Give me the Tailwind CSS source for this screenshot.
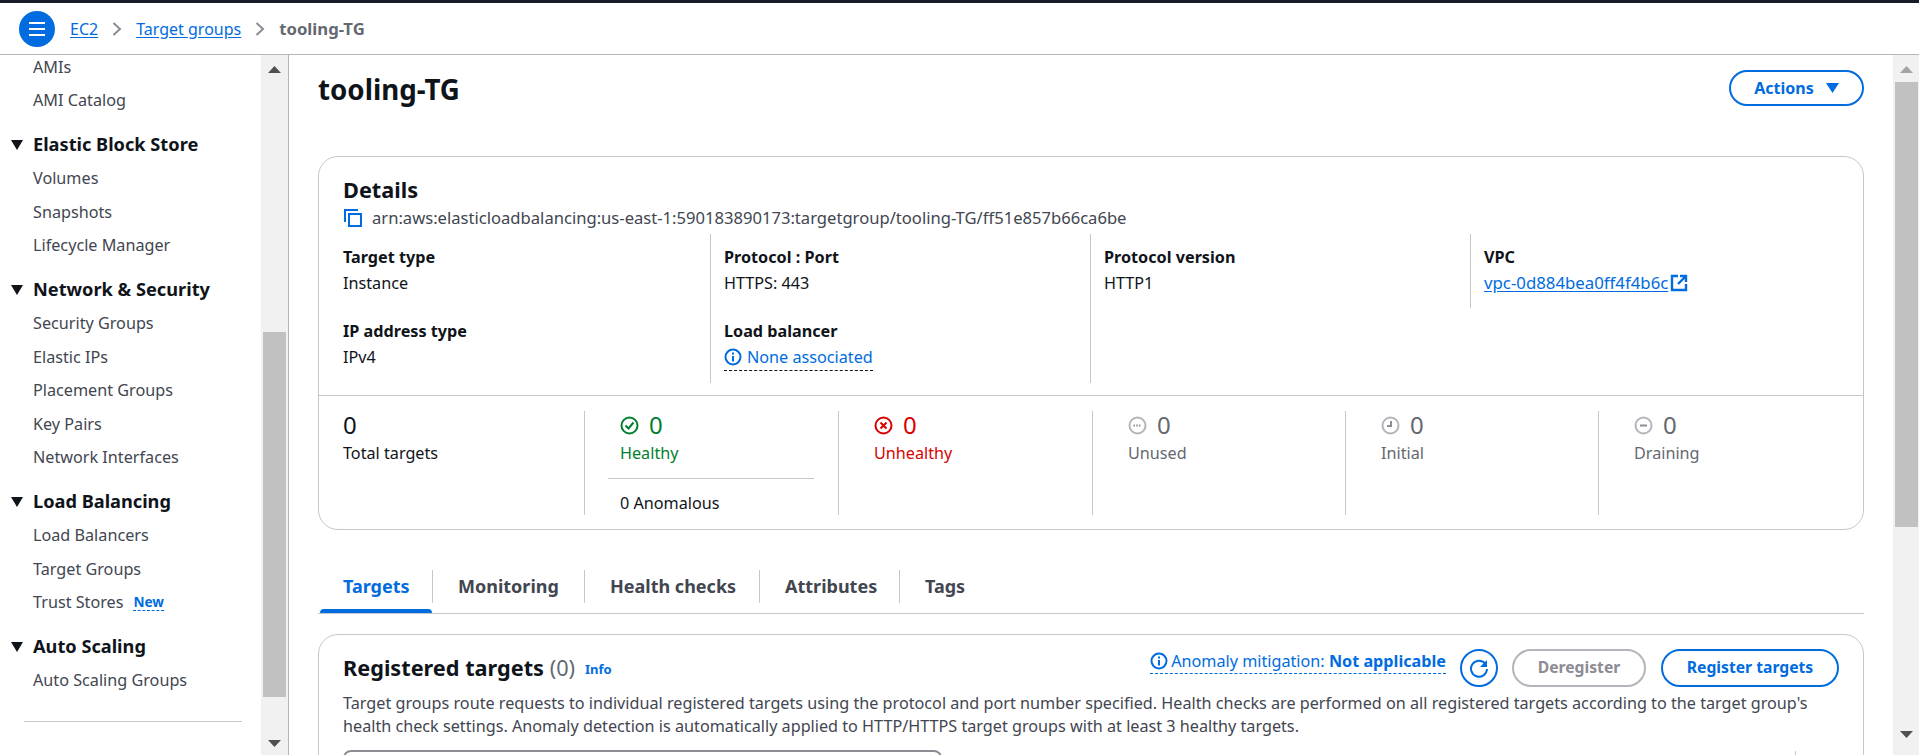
<!DOCTYPE html>
<html><head><meta charset="utf-8"><script src="https://cdn.jsdelivr.net/npm/@tailwindcss/browser@4"></script></head>
<body class="h-[755px] w-[1919px] overflow-hidden bg-white font-['Noto_Sans',sans-serif] text-[16.2px] text-[#0f141a]">
<div class="h-[3px] bg-[#161d26]"></div>
<header class="flex h-[52px] items-center border-b border-[#b4b4bb] pl-[19px] text-[16px]">
  <button class="flex size-[36px] items-center justify-center rounded-full bg-[#006ce0]"><svg width="20" height="16" viewBox="0 0 20 16" fill="none" stroke="#fff" stroke-width="2"><path d="M2 2h16M2 8h16M2 14h16"/></svg></button>
  <a class="ml-[15px] text-[#006ce0] underline underline-offset-2">EC2</a>
  <svg class="mx-[14px]" width="10" height="14" viewBox="0 0 10 14" fill="none" stroke="#8c8c94" stroke-width="2"><path d="M1.5 1l6.5 6-6.5 6"/></svg>
  <a class="text-[#006ce0] underline underline-offset-2">Target groups</a>
  <svg class="mx-[14px]" width="10" height="14" viewBox="0 0 10 14" fill="none" stroke="#8c8c94" stroke-width="2"><path d="M1.5 1l6.5 6-6.5 6"/></svg>
  <span class="text-[16.7px] font-bold text-[#656871]">tooling-TG</span>
</header>
<div class="flex h-[700px]">
  <aside class="flex w-[289px] shrink-0 border-r border-[#b4b4bb]">
    <nav class="h-full w-[261px] overflow-hidden">
      <ul class="-mt-[5px] text-[#424650]">
        <li class="flex h-[33.5px] items-center pl-[33px]">AMIs</li>
        <li class="flex h-[33.5px] items-center pl-[33px]">AMI Catalog</li>
        <li class="mt-[11px] flex h-[33.5px] items-center gap-[10px] pl-[11px] text-[18.2px] font-bold text-[#0f141a]"><svg width="12" height="10" viewBox="0 0 12 10" fill="#0f141a"><path d="M0 0h12L6 10z"/></svg>Elastic Block Store</li>
        <li class="flex h-[33.5px] items-center pl-[33px]">Volumes</li>
        <li class="flex h-[33.5px] items-center pl-[33px]">Snapshots</li>
        <li class="flex h-[33.5px] items-center pl-[33px]">Lifecycle Manager</li>
        <li class="mt-[11px] flex h-[33.5px] items-center gap-[10px] pl-[11px] text-[18.2px] font-bold text-[#0f141a]"><svg width="12" height="10" viewBox="0 0 12 10" fill="#0f141a"><path d="M0 0h12L6 10z"/></svg>Network &amp; Security</li>
        <li class="flex h-[33.5px] items-center pl-[33px]">Security Groups</li>
        <li class="flex h-[33.5px] items-center pl-[33px]">Elastic IPs</li>
        <li class="flex h-[33.5px] items-center pl-[33px]">Placement Groups</li>
        <li class="flex h-[33.5px] items-center pl-[33px]">Key Pairs</li>
        <li class="flex h-[33.5px] items-center pl-[33px]">Network Interfaces</li>
        <li class="mt-[11px] flex h-[33.5px] items-center gap-[10px] pl-[11px] text-[18.2px] font-bold text-[#0f141a]"><svg width="12" height="10" viewBox="0 0 12 10" fill="#0f141a"><path d="M0 0h12L6 10z"/></svg>Load Balancing</li>
        <li class="flex h-[33.5px] items-center pl-[33px]">Load Balancers</li>
        <li class="flex h-[33.5px] items-center pl-[33px]">Target Groups</li>
        <li class="flex h-[33.5px] items-center gap-[10px] pl-[33px]">Trust Stores <span class="border-b border-dashed border-[#006ce0] text-[13.6px] font-bold leading-[16px] text-[#006ce0]">New</span></li>
        <li class="mt-[11px] flex h-[33.5px] items-center gap-[10px] pl-[11px] text-[18.2px] font-bold text-[#0f141a]"><svg width="12" height="10" viewBox="0 0 12 10" fill="#0f141a"><path d="M0 0h12L6 10z"/></svg>Auto Scaling</li>
        <li class="flex h-[33.5px] items-center pl-[33px]">Auto Scaling Groups</li>
      </ul>
      <div class="ml-[24px] mt-[24px] w-[218px] border-t border-[#c6c6cd]"></div>
    </nav>
    <div class="flex h-full w-[27px] flex-col items-center bg-[#f1f1f1]">
      <svg class="mt-[11px] shrink-0" width="13" height="7" viewBox="0 0 13 7" fill="#505050"><path d="M6.5 0L13 7H0z"/></svg>
      <div class="mt-[259px] h-[365px] w-[23px] shrink-0 bg-[#c1c1c1]"></div>
      <svg class="mt-[43px] shrink-0" width="13" height="7" viewBox="0 0 13 7" fill="#505050"><path d="M6.5 7L13 0H0z"/></svg>
    </div>
  </aside>
  <main class="h-full flex-1 overflow-hidden px-[29px]">
    <div class="flex h-[101px] items-start justify-between pt-[15px]">
      <h1 class="text-[27.7px] font-bold leading-[38px]">tooling-TG</h1>
      <button class="flex h-[36px] w-[135px] items-center justify-center gap-[12px] rounded-full border-2 border-[#006ce0] text-[16px] font-bold text-[#006ce0]">Actions<svg width="13" height="10" viewBox="0 0 13 10" fill="#006ce0"><path d="M0 0h13L6.5 10z"/></svg></button>
    </div>
    <section class="h-[374px] rounded-[20px] border border-[#c6c6cd]">
      <div class="px-[24px] pt-[19px]">
        <h2 class="text-[21.7px] font-bold leading-[28px]">Details</h2>
        <div class="mt-[4px] flex h-[20px] items-center gap-[10px] pl-[1px] text-[16.6px] text-[#424650]">
          <svg width="18" height="18" viewBox="0 0 18 18" fill="none" stroke="#006ce0" stroke-width="2"><path d="M1 13V1h13"/><rect x="5" y="5" width="12" height="12"/></svg>
          <span>arn:aws:elasticloadbalancing:us-east-1:590183890173:targetgroup/tooling-TG/ff51e857b66ca6be</span>
        </div>
      </div>
      <div class="mt-[6px] grid h-[149px] grid-cols-[367px_380px_380px_1fr] pl-[24px]">
        <div class="pt-[10px]">
          <div class="font-bold leading-[26px]">Target type</div><div class="leading-[26px]">Instance</div>
          <div class="mt-[22px] font-bold leading-[26px]">IP address type</div><div class="leading-[26px]">IPv4</div>
        </div>
        <div class="border-l border-[#c6c6cd] pl-[13px] pt-[10px]">
          <div class="font-bold leading-[26px]">Protocol : Port</div><div class="leading-[26px]">HTTPS: 443</div>
          <div class="mt-[22px] font-bold leading-[26px]">Load balancer</div>
          <div class="flex h-[27px] w-fit items-center gap-[5px] border-b border-dashed border-[#0f141a] text-[#006ce0]"><svg width="18" height="18" viewBox="0 0 18 18" fill="none" stroke="#006ce0" stroke-width="2"><circle cx="9" cy="9" r="7.5"/><path d="M9 8v5.5M9 4.5v2"/></svg>None associated</div>
        </div>
        <div class="border-l border-[#c6c6cd] pl-[13px] pt-[10px]">
          <div class="font-bold leading-[26px]">Protocol version</div><div class="leading-[26px]">HTTP1</div>
        </div>
        <div class="h-[74px] border-l border-[#c6c6cd] pl-[13px] pt-[10px]">
          <div class="font-bold leading-[26px]">VPC</div>
          <div class="flex h-[26px] items-center text-[16.8px] text-[#006ce0]"><a class="pr-[2px] underline underline-offset-2">vpc-0d884bea0ff4f4b6c</a><svg width="18" height="18" viewBox="0 0 18 18" fill="none" stroke="#006ce0" stroke-width="2.4"><path d="M8 2H2v14h14v-6M10 2h6v6M16 2L8 10"/></svg></div>
        </div>
      </div>
      <div class="mt-[12px] grid grid-cols-[241px_254px_254px_253px_253px_1fr] border-t border-[#c6c6cd] pl-[24px] pt-[15px]">
        <div class="h-[104px]">
          <div class="text-[24px] leading-[28px]">0</div><div class="leading-[28px]">Total targets</div>
        </div>
        <div class="h-[104px] border-l border-[#c6c6cd] pl-[35px] text-[#00802f]">
          <div class="flex h-[28px] items-center gap-[10px] text-[24px]"><svg width="19" height="19" viewBox="0 0 19 19" fill="none" stroke="#00802f" stroke-width="2"><circle cx="9.5" cy="9.5" r="8"/><path d="M5.5 9.5l3 3 5-6"/></svg>0</div>
          <div class="leading-[28px]">Healthy</div>
          <div class="-ml-[12px] mt-[11px] w-[206px] border-t border-[#c6c6cd]"></div>
          <div class="mt-[11px] leading-[26px] text-[#0f141a]">0 Anomalous</div>
        </div>
        <div class="h-[104px] border-l border-[#c6c6cd] pl-[35px] text-[#db0000]">
          <div class="flex h-[28px] items-center gap-[10px] text-[24px]"><svg width="19" height="19" viewBox="0 0 19 19" fill="none" stroke="#db0000" stroke-width="2"><circle cx="9.5" cy="9.5" r="8"/><path d="M6.5 6.5l6 6M12.5 6.5l-6 6"/></svg>0</div>
          <div class="leading-[28px]">Unhealthy</div>
        </div>
        <div class="h-[104px] border-l border-[#c6c6cd] pl-[35px] text-[#656871]">
          <div class="flex h-[28px] items-center gap-[10px] text-[24px]"><svg width="19" height="19" viewBox="0 0 19 19" fill="none" stroke="#b4b4bb" stroke-width="2"><circle cx="9.5" cy="9.5" r="8"/><path stroke="#8c8c94" stroke-dasharray="1.5 1.2" d="M5.5 9.5h8"/></svg>0</div>
          <div class="leading-[28px]">Unused</div>
        </div>
        <div class="h-[104px] border-l border-[#c6c6cd] pl-[35px] text-[#656871]">
          <div class="flex h-[28px] items-center gap-[10px] text-[24px]"><svg width="19" height="19" viewBox="0 0 19 19" fill="none" stroke="#b4b4bb" stroke-width="2"><circle cx="9.5" cy="9.5" r="8"/><path stroke="#8c8c94" d="M10 5v5H6"/></svg>0</div>
          <div class="leading-[28px]">Initial</div>
        </div>
        <div class="h-[104px] border-l border-[#c6c6cd] pl-[35px] text-[#656871]">
          <div class="flex h-[28px] items-center gap-[10px] text-[24px]"><svg width="19" height="19" viewBox="0 0 19 19" fill="none" stroke="#b4b4bb" stroke-width="2"><circle cx="9.5" cy="9.5" r="8"/><path stroke="#8c8c94" d="M6 9.5h7"/></svg>0</div>
          <div class="leading-[28px]">Draining</div>
        </div>
      </div>
    </section>
    <div class="mt-[40px] flex h-[44px] border-b border-[#c6c6cd] text-[18px] font-bold text-[#424650]">
      <div class="relative flex h-[33px] w-[115px] items-center border-r border-[#c6c6cd] pl-[25px] text-[#006ce0]">Targets<span class="absolute -bottom-[10px] left-[2px] right-0 h-[4px] rounded-t-[4px] bg-[#006ce0]"></span></div>
      <div class="flex h-[33px] w-[152px] items-center border-r border-[#c6c6cd] pl-[25px]">Monitoring</div>
      <div class="flex h-[33px] w-[175px] items-center border-r border-[#c6c6cd] pl-[25px]">Health checks</div>
      <div class="flex h-[33px] w-[140px] items-center border-r border-[#c6c6cd] pl-[25px]">Attributes</div>
      <div class="flex h-[33px] items-center pl-[25px]">Tags</div>
    </div>
    <section class="mt-[20px] h-[200px] rounded-[20px] border border-[#c6c6cd] px-[24px] pt-[14px]">
      <div class="flex h-[38px] items-center justify-between">
        <div class="flex items-center gap-[10px]">
          <h2 class="text-[21.7px] font-bold">Registered targets <span class="font-normal text-[#656871]">(0)</span></h2>
          <a class="mt-[4px] text-[13px] font-bold text-[#006ce0]">Info</a>
        </div>
        <div class="flex items-center">
          <span class="flex h-[25px] items-center gap-[3px] self-start border-b border-dashed border-[#006ce0] text-[#006ce0]"><svg width="18" height="18" viewBox="0 0 18 18" fill="none" stroke="#006ce0" stroke-width="2"><circle cx="9" cy="9" r="7.5"/><path d="M9 8v5.5M9 4.5v2"/></svg><span>Anomaly mitigation: <b>Not applicable</b></span></span>
          <button class="ml-[14px] flex size-[38px] items-center justify-center rounded-full border-2 border-[#006ce0]"><svg width="20" height="20" viewBox="0 0 20 20" fill="none" stroke="#006ce0" stroke-width="2"><path d="M16.5 6A8 8 0 1 0 18 11"/><path fill="#006ce0" stroke="none" d="M18 2v7h-7z"/></svg></button>
          <button class="ml-[14px] h-[38px] w-[134px] rounded-full border-2 border-[#b4b4bb] text-[15.7px] font-bold text-[#8c8c94]">Deregister</button>
          <button class="ml-[15px] h-[38px] w-[178px] rounded-full border-2 border-[#006ce0] text-[15.7px] font-bold text-[#006ce0]">Register targets</button>
        </div>
      </div>
      <p class="mt-[5px] leading-[23px] text-[#424650]">Target groups route requests to individual registered targets using the protocol and port number specified. Health checks are performed on all registered targets according to the target group's<br>health check settings. Anomaly detection is automatically applied to HTTP/HTTPS target groups with at least 3 healthy targets.</p>
      <div class="mt-[12px] flex">
        <div class="h-[20px] w-[599px] rounded-t-[8px] border-2 border-[#8c8c94]"></div>
        <div class="ml-auto mr-[43px] mt-[1px] h-[20px] border-l border-[#c6c6cd]"></div>
      </div>
    </section>
  </main>
  <div class="flex h-full w-[26px] shrink-0 flex-col items-center bg-[#f1f1f1]">
    <svg class="mt-[11px] shrink-0" width="13" height="7" viewBox="0 0 13 7" fill="#a3a3a3"><path d="M6.5 0L13 7H0z"/></svg>
    <div class="mt-[9px] h-[445px] w-[23px] shrink-0 bg-[#c1c1c1]"></div>
    <svg class="mt-[204px] shrink-0" width="13" height="7" viewBox="0 0 13 7" fill="#505050"><path d="M6.5 7L13 0H0z"/></svg>
  </div>
</div>
</body></html>
